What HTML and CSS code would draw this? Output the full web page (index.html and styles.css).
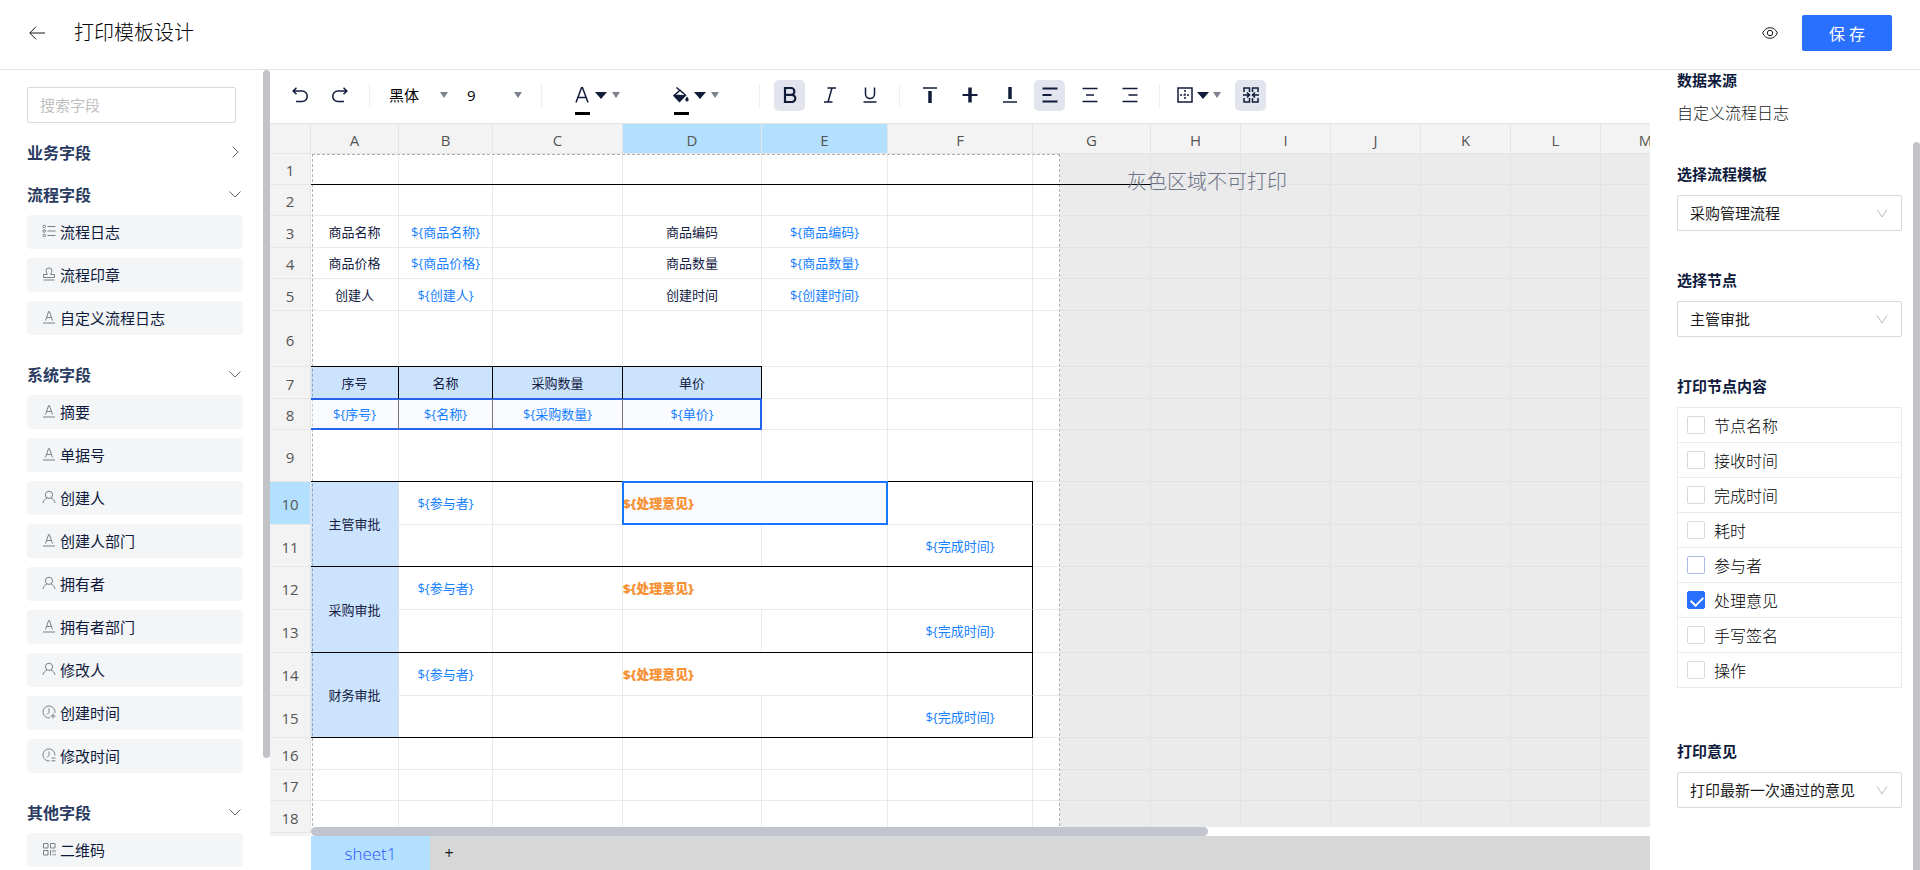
FILE: index.html
```html
<!DOCTYPE html>
<html lang="zh-CN">
<head>
  <meta charset="UTF-8">
  <meta name="viewport" content="width=device-width, initial-scale=1.0">
  <title>打印模板设计</title>
  <link rel="stylesheet" href="styles.css">
</head>
<body>

  <!-- Shared icons -->
  <svg class="sprite" aria-hidden="true">
    <symbol id="i-text" viewBox="0 0 14 14"><path d="M3.5 10.5 6.6 1.5h.8l3.1 9M4.6 7.5h4.8M1 13h12"/></symbol>
    <symbol id="i-user" viewBox="0 0 14 14"><circle cx="7" cy="4.8" r="3.6"/><path d="M1 13c.4-2.600 2-4.300 4-4.900M13 13c-.4-2.600-2-4.300-4-4.900"/></symbol>
    <symbol id="i-list" viewBox="0 0 14 14"><circle cx="2.200" cy="2.500" r="1.300"/><circle cx="2.200" cy="7" r="1.300"/><circle cx="2.200" cy="11.500" r="1.300"/><path d="M5.500 2.500h8M5.500 7h8M5.500 11.500h8"/></symbol>
    <symbol id="i-stamp" viewBox="0 0 14 14"><path d="M5.300 7.500c0-1.200-1.300-2-1.300-3.600a3 3 0 0 1 6 0c0 1.600-1.300 2.400-1.300 3.600h3.800v3h-11v-3zM1.500 13h11"/></symbol>
    <symbol id="i-clock-add" viewBox="0 0 14 14"><path d="M8 12.900A6 6 0 1 1 12.900 8M7 3.500v4L5 9.500M11 8.500v5M8.500 11h5"/></symbol>
    <symbol id="i-clock-edit" viewBox="0 0 14 14"><path d="M7.500 12.900A6 6 0 1 1 12.900 7.500M7 3.500v4L5 9.500M9.500 10h4M9.500 12.800h4"/></symbol>
    <symbol id="i-qr" viewBox="0 0 14 14"><path d="M1.500 1.500h4.500v4.500H1.500zM8.500 1.500h4.500v4.500H8.500zM1.500 8.500h4.500v4.500H1.500zM8.500 8v5.500M11 8v2.500M13 8v2M11 12v1.500M13 11.500v2"/></symbol>
    <symbol id="i-down" viewBox="0 0 12 12"><path d="M.5 3.500 6 9l5.500-5.500"/></symbol>
    <symbol id="i-right" viewBox="0 0 12 12"><path d="M3.500.5 9 6l-5.500 5.500"/></symbol>
    <symbol id="i-arrow" viewBox="0 0 12 12"><path d="M1 2.500 6 10l5-7.500"/></symbol>
  </svg>

  <header class="topbar">
    <button class="back" aria-label="返回">
      <svg width="16" height="14" viewBox="0 0 16 14"><path d="M7 .7.8 7 7 13.300M.8 7H16"/></svg>
    </button>
    <h1>打印模板设计</h1>
    <button class="preview" aria-label="预览">
      <svg width="16" height="12" viewBox="0 0 16 12"><path d="M.6 6C2.300 2.500 4.800.7 8 .7S13.700 2.500 15.400 6c-1.700 3.500-4.200 5.300-7.400 5.300S2.300 9.500.6 6z"/><circle cx="8" cy="6" r="2.700"/></svg>
    </button>
    <button class="save">保 存</button>
  </header>

  <main class="layout">
    <aside class="fields">
      <input class="search" type="text" placeholder="搜索字段" aria-label="搜索字段">

      <section>
        <h2>业务字段 <svg><use href="#i-right"/></svg></h2>
      </section>

      <section>
        <h2>流程字段 <svg><use href="#i-down"/></svg></h2>
        <ul>
          <li><svg><use href="#i-list"/></svg>流程日志</li>
          <li><svg><use href="#i-stamp"/></svg>流程印章</li>
          <li><svg><use href="#i-text"/></svg>自定义流程日志</li>
        </ul>
      </section>

      <section>
        <h2>系统字段 <svg><use href="#i-down"/></svg></h2>
        <ul>
          <li><svg><use href="#i-text"/></svg>摘要</li>
          <li><svg><use href="#i-text"/></svg>单据号</li>
          <li><svg><use href="#i-user"/></svg>创建人</li>
          <li><svg><use href="#i-text"/></svg>创建人部门</li>
          <li><svg><use href="#i-user"/></svg>拥有者</li>
          <li><svg><use href="#i-text"/></svg>拥有者部门</li>
          <li><svg><use href="#i-user"/></svg>修改人</li>
          <li><svg><use href="#i-clock-add"/></svg>创建时间</li>
          <li><svg><use href="#i-clock-edit"/></svg>修改时间</li>
        </ul>
      </section>

      <section>
        <h2>其他字段 <svg><use href="#i-down"/></svg></h2>
        <ul>
          <li><svg><use href="#i-qr"/></svg>二维码</li>
        </ul>
      </section>
      <div class="thumb"></div>
    </aside>

    <section class="editor">
      <div class="toolbar">
        <div class="group">
          <button class="tool" aria-label="撤销"><svg viewBox="0 0 16 16"><path d="M4.500.8 1.200 4l3.300 3.200M1.200 4H10a5 5 0 0 1 0 10.500H4"/></svg></button>
          <button class="tool" aria-label="重做"><svg viewBox="0 0 16 16"><path d="m11.500.8 3.300 3.200-3.300 3.200M14.800 4H6a5 5 0 0 0 0 10.500h6"/></svg></button>
        </div>
        <div class="group">
          <span class="picker font"><select aria-label="字体"><option>黑体</option><option>宋体</option></select></span>
          <span class="picker size"><select aria-label="字号"><option>9</option><option>10</option><option>12</option></select></span>
        </div>
        <div class="group">
          <button class="color" aria-label="字体颜色">
            <span class="swatch"><svg viewBox="0 0 16 16"><path d="M2 15.500 7.500.8h1L14 15.500M4 10.500h8"/></svg></span>
            <i class="caret big"></i><i class="caret"></i>
          </button>
          <button class="color" aria-label="填充颜色">
            <span class="swatch"><svg viewBox="0 0 16 16"><path d="M3.500.5 7 3.500M7 3.200l5.500 5-6 6.300L1 8.500z"/><path class="solid" d="M1 7.500 12.800 8.200 6.500 15 .6 9zM14 9.500c1 1.500 1.700 2.400 1.700 3.300a1.700 1.700 0 0 1-3.400 0c0-.9.7-1.800 1.700-3.300z"/></svg></span>
            <i class="caret big"></i><i class="caret"></i>
          </button>
        </div>
        <div class="group">
          <button class="tool on" aria-label="加粗"><svg class="heavy" viewBox="0 0 16 16"><path d="M3 1h6a3.400 3.400 0 0 1 0 6.800H3zM3 7.800h6.700a3.500 3.500 0 0 1 0 7.200H3z"/></svg></button>
          <button class="tool" aria-label="斜体"><svg viewBox="0 0 16 16"><path d="M5.500 1H14M2 15h8.500M10 1 6 15"/></svg></button>
          <button class="tool" aria-label="下划线"><svg viewBox="0 0 16 16"><path d="M3.500.5v6.500a4.500 4.500 0 0 0 9 0V.5M1.500 15h13"/></svg></button>
        </div>
        <div class="group">
          <button class="tool" aria-label="顶端对齐"><svg viewBox="0 0 16 16"><path d="M1 1h14"/><path class="stem" d="M8 4v12"/></svg></button>
          <button class="tool" aria-label="垂直居中"><svg viewBox="0 0 16 16"><path class="bar" d="M.5 8h15"/><path class="stem" d="M8 .5v15"/></svg></button>
          <button class="tool" aria-label="底端对齐"><svg viewBox="0 0 16 16"><path d="M1 15h14"/><path class="stem" d="M8 0v12"/></svg></button>
          <button class="tool on" aria-label="左对齐"><svg class="heavy" viewBox="0 0 16 16"><path d="M.5 1.500h15M.5 8h9M.5 14.500h15"/></svg></button>
          <button class="tool" aria-label="居中"><svg viewBox="0 0 16 16"><path d="M.5 1.500h15M4 8h8M.5 14.500h15"/></svg></button>
          <button class="tool" aria-label="右对齐"><svg viewBox="0 0 16 16"><path d="M.5 1.500h15M6.500 8h9M.5 14.500h15"/></svg></button>
        </div>
        <div class="group last">
          <button class="borders" aria-label="边框">
            <svg viewBox="0 0 16 16"><path d="M1 1h14v14H1z"/><path stroke-dasharray="2 1.500" d="M8 3v10M3 8h10"/></svg>
            <i class="caret big"></i><i class="caret"></i>
          </button>
          <button class="tool on" aria-label="合并单元格"><svg viewBox="0 0 16 16"><path d="M1 5V1h5.500v4M1 11v4h5.500v-4M15 5V1H9.500v4M15 11v4H9.500v-4M0 8h6M10 8h6M4 5.500 6.500 8 4 10.500M12 5.500 9.500 8l2.500 2.500"/></svg></button>
        </div>
      </div>

      <div class="sheet">
        <div class="printable"></div>
        <table id="grid"></table>
        <p class="hint">灰色区域不可打印</p>
        <div class="hscroll"><div class="hthumb"></div></div>
      </div>

      <footer class="tabs">
        <button class="tab">sheet1</button>
        <button class="add" aria-label="新增工作表">+</button>
      </footer>
    </section>

    <aside class="panel">
      <div class="field source">
        <h3>数据来源</h3>
        <p>自定义流程日志</p>
      </div>
      <div class="field">
        <label for="flow">选择流程模板</label>
        <div class="select">
          <select id="flow"><option>采购管理流程</option></select>
          <svg><use href="#i-arrow"/></svg>
        </div>
      </div>
      <div class="field">
        <label for="node">选择节点</label>
        <div class="select">
          <select id="node"><option>主管审批</option><option>采购审批</option><option>财务审批</option></select>
          <svg><use href="#i-arrow"/></svg>
        </div>
      </div>
      <div class="field contents">
        <h3>打印节点内容</h3>
        <ul>
          <li><label><input type="checkbox">节点名称</label></li>
          <li><label><input type="checkbox">接收时间</label></li>
          <li><label><input type="checkbox">完成时间</label></li>
          <li><label><input type="checkbox">耗时</label></li>
          <li><label><input type="checkbox" class="hover">参与者</label></li>
          <li><label><input type="checkbox" checked>处理意见</label></li>
          <li><label><input type="checkbox">手写签名</label></li>
          <li><label><input type="checkbox">操作</label></li>
        </ul>
      </div>
      <div class="field">
        <label for="opinion">打印意见</label>
        <div class="select">
          <select id="opinion"><option>打印最新一次通过的意见</option></select>
          <svg><use href="#i-arrow"/></svg>
        </div>
      </div>
      <div class="thumb"></div>
    </aside>
  </main>

  <script src="script.js"></script>
</body>
</html>
```

FILE: styles.css
```css
* {
  box-sizing: border-box;
}

body {
  margin: 0;
  height: 100vh;
  display: flex;
  flex-direction: column;
  overflow: hidden;
  font-family: "Open Sans", "Noto Sans CJK SC", sans-serif;
  font-size: 15px;
  color: #1a1a1a;
  background: #fff;
}

h1, h2, h3, p, ul {
  margin: 0;
  padding: 0;
}

ul {
  list-style: none;
}

button, input, select {
  font: inherit;
  color: inherit;
}

button {
  border: none;
  padding: 0;
  background: none;
  cursor: pointer;
}

svg {
  fill: none;
  stroke: currentColor;
  flex: none;
}

.sprite {
  position: absolute;
  width: 0;
  height: 0;
}

/* Top bar */
.topbar {
  height: 70px;
  flex: none;
  display: flex;
  align-items: center;
  padding: 0 28px 3px 29px;
  border-bottom: 1px solid #e3e4e6;
}

.topbar h1 {
  margin-left: 29px;
  font-size: 20px;
  font-weight: 300;
  line-height: 28px;
  color: #000;
}

.back, .preview {
  display: flex;
}

.preview {
  margin-left: auto;
}

.save {
  width: 90px;
  height: 36px;
  margin-left: 24px;
  border-radius: 2px;
  background: #2970ff;
  color: #fff;
  font-size: 16px;
}

.layout {
  flex: 1;
  min-height: 0;
  display: flex;
}

/* Field list */
.fields {
  position: relative;
  width: 270px;
  flex: none;
  padding: 17px 27px 0;
  overflow: hidden;
}

.search {
  display: block;
  width: 209px;
  height: 36px;
  margin-bottom: 8px;
  padding: 0 12px;
  border: 1px solid #d9d9d9;
  border-radius: 2px;
}

.search::placeholder {
  color: #bfbfbf;
}

.fields h2 {
  display: flex;
  align-items: center;
  justify-content: space-between;
  height: 42px;
  padding-right: 2px;
  font-size: 16px;
  color: #2a3b61;
}

.fields h2 svg {
  width: 12px;
  height: 12px;
  color: #666;
}

.fields ul {
  width: 216px;
  padding-bottom: 9px;
}

.fields li {
  display: flex;
  align-items: center;
  gap: 4px;
  height: 34px;
  margin-bottom: 9px;
  padding: 0 0 2px 15px;
  border-radius: 4px;
  background: #f4f5f7;
  color: #0f1b3d;
}

.fields li svg {
  width: 14px;
  height: 14px;
  color: #7d8088;
}

.thumb {
  position: absolute;
  top: 0;
  right: 0;
  width: 7px;
  height: 86%;
  border-radius: 4px;
  background: #c1c3c6;
}

/* Toolbar */
.editor {
  flex: 1;
  min-width: 0;
  display: flex;
  flex-direction: column;
}

.toolbar {
  display: flex;
  align-items: center;
  height: 54px;
  flex: none;
  padding-bottom: 3px;
  border-bottom: 1px solid #e6e6e6;
  color: #111c3b;
}

.group {
  display: flex;
  align-items: center;
  gap: 9px;
  height: 23px;
  padding: 0 14px;
}

.group + .group {
  border-left: 1px solid #eee;
}

.group.last {
  gap: 10px;
  padding-left: 17px;
}

.tool {
  display: flex;
  align-items: center;
  justify-content: center;
  width: 31px;
  height: 31px;
  border-radius: 5px;
}

.tool.on {
  background: #e2e5ed;
}

.toolbar svg {
  width: 16px;
  height: 16px;
  stroke-width: 1.5;
}

.toolbar .heavy {
  stroke-width: 2.2;
}

.toolbar .stem {
  stroke-width: 3.5;
}

.toolbar .bar {
  stroke-width: 2;
}

.toolbar .solid {
  fill: currentColor;
  stroke: none;
}

.picker {
  position: relative;
}

.picker.font {
  width: 69px;
}

.picker.size {
  width: 65px;
}

.picker select {
  display: block;
  width: 100%;
  height: 24px;
  padding: 0 5px;
  border: none;
  background: none;
  color: #000;
  appearance: none;
}

.picker::after {
  content: "";
  position: absolute;
  top: 9px;
  right: 5px;
  border: 4px solid transparent;
  border-top: 6px solid #7c828e;
  border-bottom: none;
}

.caret {
  border: 4px solid transparent;
  border-top: 6px solid #7c828e;
  border-bottom: none;
}

.caret.big {
  border-width: 7px 6px 0;
  border-top-color: #111c3b;
}

.color, .borders {
  display: flex;
  align-items: center;
  gap: 5px;
}

.color {
  width: 90px;
  padding-left: 18px;
}

.borders {
  gap: 4px;
  width: 48px;
}

/* the bar under the icon shows the current colour */
.swatch {
  position: relative;
  display: flex;
}

.swatch::after {
  content: "";
  position: absolute;
  top: 25px;
  left: 1px;
  width: 15px;
  height: 3px;
  background: #000;
}

/* Spreadsheet */
.sheet {
  position: relative;
  flex: 1;
  min-height: 0;
  overflow: hidden;
  background: linear-gradient(to right, #f3f3f3 41px, #ebebeb 41px);
}

.printable {
  position: absolute;
  top: 30px;
  left: 42px;
  width: 748px;
  height: 100%;
  border: 1px dashed #b0b0b0;
  box-shadow: -1px 0 #fff;
  background: #fff;
}

#grid {
  position: relative;
  table-layout: fixed;
  width: 0;
  border-spacing: 0;
  font-size: 13px;
  color: #13203f;
}

#grid th, #grid td {
  padding: 0;
  border-right: 1px solid rgba(220, 220, 220, .6);
  border-bottom: 1px solid rgba(220, 220, 220, .6);
  text-align: center;
  white-space: nowrap;
  line-height: 18px;
}

#grid th {
  padding-top: 2px;
  border-color: #e6e6e6;
  background: #f3f3f3;
  color: #555;
  font-size: 15px;
  font-weight: 400;
}

#grid th.active {
  background: #b3e0ff;
}

#grid .bind {
  color: #1480ff;
}

#grid .opinion {
  color: #f79135;
  font-weight: 900;
  text-align: left;
}

#grid .blue {
  background: rgba(0, 116, 250, .2);
}

#grid .bb {
  position: relative;
}

#grid .bb::after {
  content: "";
  position: absolute;
  right: -1px;
  bottom: -1px;
  left: 0;
  height: 1px;
  background: #000;
}

#grid .br {
  border-right-color: #000;
}

#grid .loop-head {
  border-bottom-color: #2563eb;
}

/* repeated detail row, framed in blue */
#grid .loop {
  border-right-color: #777;
  border-bottom-color: #2563eb;
  box-shadow: inset 0 1px #2563eb, inset 0 -1px #2563eb;
  background: rgba(240, 246, 254, .4);
}

#grid .loop-end {
  border-right-color: #2563eb;
  box-shadow: inset 0 1px #2563eb, inset -1px -1px #2563eb;
}

#grid .selected {
  position: relative;
  background: rgba(240, 246, 254, .4);
}

#grid .selected::after {
  content: "";
  position: absolute;
  inset: -1px;
  border: 2px solid #1478ff;
}

.hint {
  position: absolute;
  top: 44px;
  left: 857px;
  font-size: 20px;
  font-weight: 300;
  line-height: 28px;
  color: #6b7489;
}

.hscroll {
  position: absolute;
  left: 41px;
  right: 0;
  bottom: 0;
  height: 9px;
  background: #fff;
}

.hthumb {
  width: 67%;
  height: 9px;
  border-radius: 5px;
  background: #c2c5cf;
}

.tabs {
  display: flex;
  height: 34px;
  flex: none;
  margin-left: 41px;
  background: #d7d7d7;
}

.tab {
  width: 119px;
  background: #b3e0ff;
  color: #2f54ff;
  font-size: 17px;
  font-weight: 300;
}

.add {
  width: 38px;
  font-size: 16px;
}

/* Settings panel */
.panel {
  position: relative;
  width: 270px;
  flex: none;
  padding: 0 18px 0 27px;
  overflow: hidden;
}

.panel .thumb {
  top: 72px;
  height: 100%;
}

.field {
  margin-bottom: 39px;
}

.field h3, .field > label {
  display: block;
  margin-bottom: 11px;
  font-size: 15px;
  font-weight: 700;
  line-height: 20px;
  color: #0f1b3d;
}

.source p {
  font-size: 16px;
  font-weight: 300;
  line-height: 24px;
}

.select {
  position: relative;
}

.select select {
  display: block;
  width: 100%;
  height: 36px;
  padding: 0 12px;
  border: 1px solid #d9d9d9;
  border-radius: 2px;
  background: #fff;
  appearance: none;
}

.select svg {
  position: absolute;
  top: 12px;
  right: 14px;
  width: 12px;
  height: 12px;
  color: #bbb;
}

.contents {
  margin-bottom: 53px;
}

.contents ul {
  border: 1px solid #ebebeb;
  border-bottom: none;
}

.contents li {
  border-bottom: 1px solid #ebebeb;
}

.contents label {
  display: flex;
  align-items: center;
  gap: 9px;
  height: 34px;
  padding-left: 9px;
  font-size: 16px;
  font-weight: 300;
  color: #000;
}

.contents input {
  position: relative;
  width: 18px;
  height: 18px;
  margin: 0;
  border: 1px solid #d9d9d9;
  border-radius: 2px;
  appearance: none;
}

.contents input.hover {
  border-color: #a9bce4;
}

.contents input:checked {
  border-color: #2970ff;
  background: #2970ff;
}

.contents input:checked::after {
  content: "";
  position: absolute;
  top: 2px;
  left: 5px;
  width: 6px;
  height: 10px;
  border: solid #fff;
  border-width: 0 2px 2px 0;
  transform: rotate(45deg);
}
```

FILE: script.js
```js
const columns = {
  A: 88, B: 94, C: 130, D: 139, E: 126, F: 145, G: 118, H: 90, I: 90,
  J: 90, K: 90, L: 90, M: 90
};
const rowHeights = [31, 31, 32, 31, 32, 56, 32, 31, 52, 43, 42, 43, 43, 43, 42, 32, 31, 32];

// cell -> text, classes, spans
const cells = {
  A3: { text: '商品名称' }, B3: { text: '${商品名称}', cls: 'bind' },
  D3: { text: '商品编码' }, E3: { text: '${商品编码}', cls: 'bind' },
  A4: { text: '商品价格' }, B4: { text: '${商品价格}', cls: 'bind' },
  D4: { text: '商品数量' }, E4: { text: '${商品数量}', cls: 'bind' },
  A5: { text: '创建人' }, B5: { text: '${创建人}', cls: 'bind' },
  D5: { text: '创建时间' }, E5: { text: '${创建时间}', cls: 'bind' },
  A7: { text: '序号', cls: 'blue br loop-head' }, B7: { text: '名称', cls: 'blue br loop-head' },
  C7: { text: '采购数量', cls: 'blue br loop-head' }, D7: { text: '单价', cls: 'blue br loop-head' },
  A8: { text: '${序号}', cls: 'bind loop' }, B8: { text: '${名称}', cls: 'bind loop' },
  C8: { text: '${采购数量}', cls: 'bind loop' }, D8: { text: '${单价}', cls: 'bind loop loop-end' }
};

['A', 'B', 'C', 'D', 'E', 'F', 'G'].forEach(c => { cells[c + 1] = { cls: 'bb' }; });
['A', 'B', 'C', 'D'].forEach(c => { cells[c + 6] = { cls: 'bb' }; });
['A', 'B', 'C', 'D', 'E', 'F'].forEach(c => { cells[c + 9] = { cls: 'bb' }; });

// approval blocks take two rows each
[[10, '主管审批'], [12, '采购审批'], [14, '财务审批']].forEach(([row, name]) => {
  const next = row + 1;
  cells['A' + row] = { text: name, cls: 'blue bb', rows: 2 };
  cells['A' + next] = null;
  cells['B' + row] = { text: '${参与者}', cls: 'bind' };
  cells['D' + row] = { text: '${处理意见}', cls: row === 10 ? 'opinion selected' : 'opinion', cols: 2 };
  cells['E' + row] = null;
  cells['F' + row] = { cls: 'br' };
  ['B', 'C', 'D', 'E'].forEach(c => { cells[c + next] = { cls: 'bb' }; });
  cells['F' + next] = { text: '${完成时间}', cls: 'bind br bb' };
});

function renderGrid() {
  const names = Object.keys(columns);
  let html = '<colgroup><col style="width:41px">';
  names.forEach(c => { html += `<col style="width:${columns[c]}px">`; });
  html += '</colgroup><thead><tr style="height:30px"><th></th>';
  names.forEach(c => {
    html += `<th class="${c === 'D' || c === 'E' ? 'active' : ''}">${c}</th>`;
  });
  html += '</tr></thead><tbody>';

  rowHeights.forEach((height, i) => {
    const row = i + 1;
    html += `<tr style="height:${height}px"><th class="${row === 10 ? 'active' : ''}">${row}</th>`;
    names.forEach(c => {
      const cell = cells[c + row];
      if (cell === null) return;
      const { text = '', cls = '', rows = 1, cols = 1 } = cell || {};
      html += `<td class="${cls}" rowspan="${rows}" colspan="${cols}">${text}</td>`;
    });
    html += '</tr>';
  });
  document.getElementById('grid').innerHTML = html + '</tbody>';
}

renderGrid();
```
